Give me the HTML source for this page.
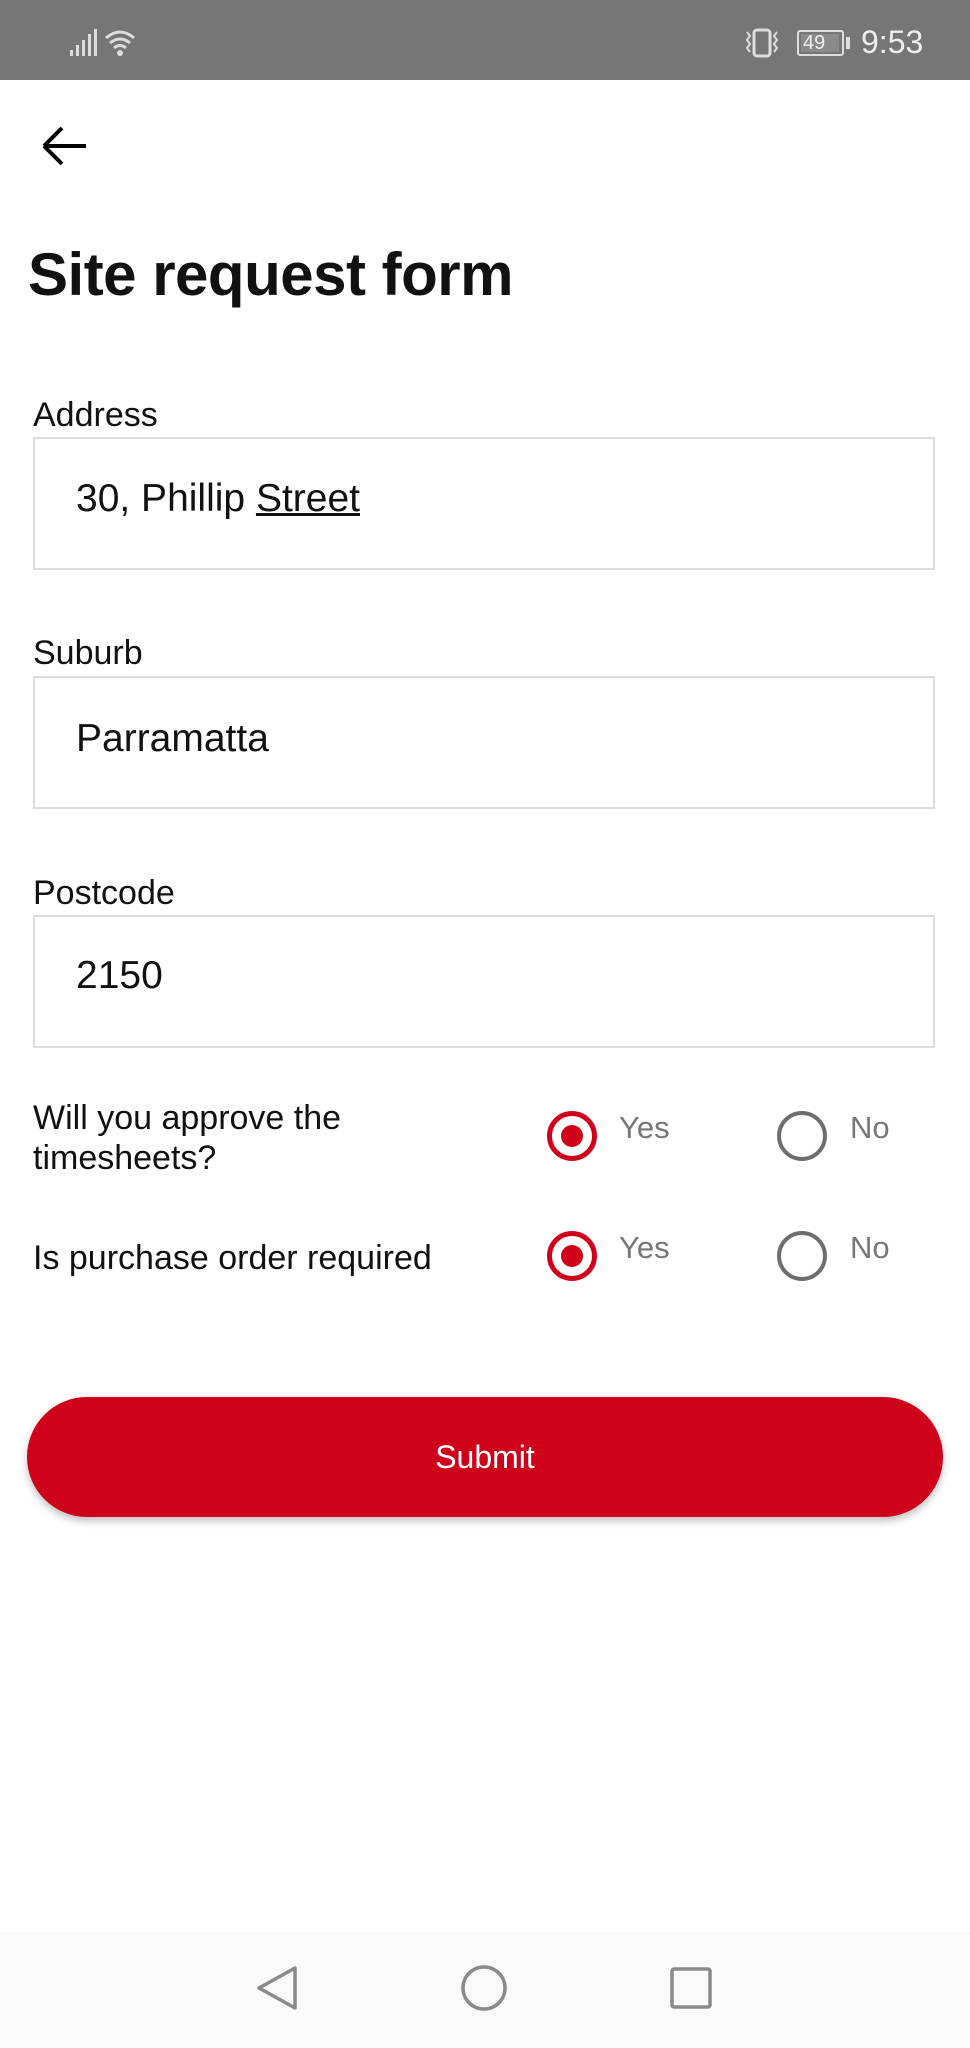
<!DOCTYPE html>
<html><head><meta charset="utf-8"><style>
*{margin:0;padding:0;box-sizing:border-box}
body{width:970px;height:2048px;background:#fff;font-family:"Liberation Sans",Roboto,sans-serif;position:relative;overflow:hidden;color:#111}
.abs{position:absolute}
.sb{left:0;top:0;width:970px;height:80px;background:#767676}
.lbl{left:33px;font-size:34px;line-height:38px}
.box{left:33px;width:902px;height:133px;border:2px solid #dcdcdc;background:#fff}
.val{left:76px;font-size:39px;line-height:44px}
.radio{width:50px;height:50px;border-radius:50%}
.on{border:5px solid #cf0019}
.on::after{content:"";position:absolute;left:9px;top:9px;width:22px;height:22px;border-radius:50%;background:#cf0019}
.off{border:4px solid #6e6e6e}
.opt{font-size:31px;color:#777;line-height:36px}
</style></head><body>
<div class="abs sb"></div>
<svg class="abs" style="left:68px;top:28px" width="80" height="30" viewBox="0 0 80 30">
<g fill="#ddd"><rect x="2" y="22" width="3" height="6"/><rect x="8" y="17" width="3" height="11"/><rect x="14" y="12" width="3" height="16"/><rect x="20" y="6" width="3" height="22"/><rect x="26" y="1" width="3" height="27"/></g>
<g fill="none" stroke="#ddd" stroke-width="3"><path d="M38 10 Q52 -2 66 10"/><path d="M42 15 Q52 7 62 15"/><path d="M46 20 Q52 15 58 20"/></g>
<circle cx="52" cy="25" r="3" fill="#ddd"/>
</svg>
<svg class="abs" style="left:742px;top:26px" width="60" height="34" viewBox="0 0 60 34">
<rect x="12" y="4" width="16" height="26" rx="3" fill="none" stroke="#ddd" stroke-width="3"/>
<path d="M5 6l3 4-3 4 3 4-3 4 3 4M35 6l-3 4 3 4-3 4 3 4-3 4" fill="none" stroke="#ddd" stroke-width="2"/>
</svg>
<div class="abs" style="left:797px;top:30px;width:47px;height:26px;border:2px solid #ddd;border-radius:3px"><div style="position:absolute;left:2px;top:2px;width:38px;height:18px;background:#8a8a8a"></div><div style="position:absolute;left:4px;top:-1px;font-size:20px;color:#eee;line-height:24px">49</div></div>
<div class="abs" style="left:846px;top:37px;width:4px;height:12px;background:#ddd"></div>
<div class="abs" style="left:861px;top:22px;font-size:32px;color:#eee;line-height:40px">9:53</div>
<svg class="abs" style="left:40px;top:123px" width="50" height="46" viewBox="0 0 50 46">
<path d="M4 23H46M4 23L22 5M4 23L22 41" fill="none" stroke="#000" stroke-width="4"/>
</svg>
<div class="abs" style="left:28px;top:243px;font-size:60px;font-weight:bold;line-height:64px;letter-spacing:-0.5px">Site request form</div>
<div class="abs lbl" style="top:396px">Address</div>
<div class="abs box" style="top:437px"></div>
<div class="abs val" style="top:477px">30, Phillip <u>Street</u></div>
<div class="abs lbl" style="top:634px">Suburb</div>
<div class="abs box" style="top:676px"></div>
<div class="abs val" style="top:717px">Parramatta</div>
<div class="abs lbl" style="top:874px">Postcode</div>
<div class="abs box" style="top:915px"></div>
<div class="abs val" style="top:954px">2150</div>
<div class="abs lbl" style="top:1098px;line-height:40px">Will you approve the<br>timesheets?</div>
<div class="abs radio on" style="left:547px;top:1111px"></div>
<div class="abs opt" style="left:619px;top:1110px">Yes</div>
<div class="abs radio off" style="left:777px;top:1111px"></div>
<div class="abs opt" style="left:850px;top:1110px">No</div>
<div class="abs lbl" style="top:1239px">Is purchase order required</div>
<div class="abs radio on" style="left:547px;top:1231px"></div>
<div class="abs opt" style="left:619px;top:1230px">Yes</div>
<div class="abs radio off" style="left:777px;top:1231px"></div>
<div class="abs opt" style="left:850px;top:1230px">No</div>
<div class="abs" style="left:27px;top:1397px;width:916px;height:120px;border-radius:60px;background:#cf0019;box-shadow:0 4px 8px rgba(0,0,0,0.25);color:#fff;font-size:32px;text-align:center;line-height:120px">Submit</div>
<div class="abs" style="left:0;top:1932px;width:970px;height:116px;background:#fafafa"></div>
<svg class="abs" style="left:250px;top:1962px" width="470" height="54" viewBox="0 0 470 54">
<path d="M45 6L45 46L9 26Z" fill="none" stroke="#8a8a8a" stroke-width="3.5" stroke-linejoin="round"/>
<circle cx="234" cy="26" r="21" fill="none" stroke="#8a8a8a" stroke-width="3.5"/>
<rect x="422" y="7" width="38" height="38" rx="2" fill="none" stroke="#8a8a8a" stroke-width="3.5"/>
</svg>
</body></html>
